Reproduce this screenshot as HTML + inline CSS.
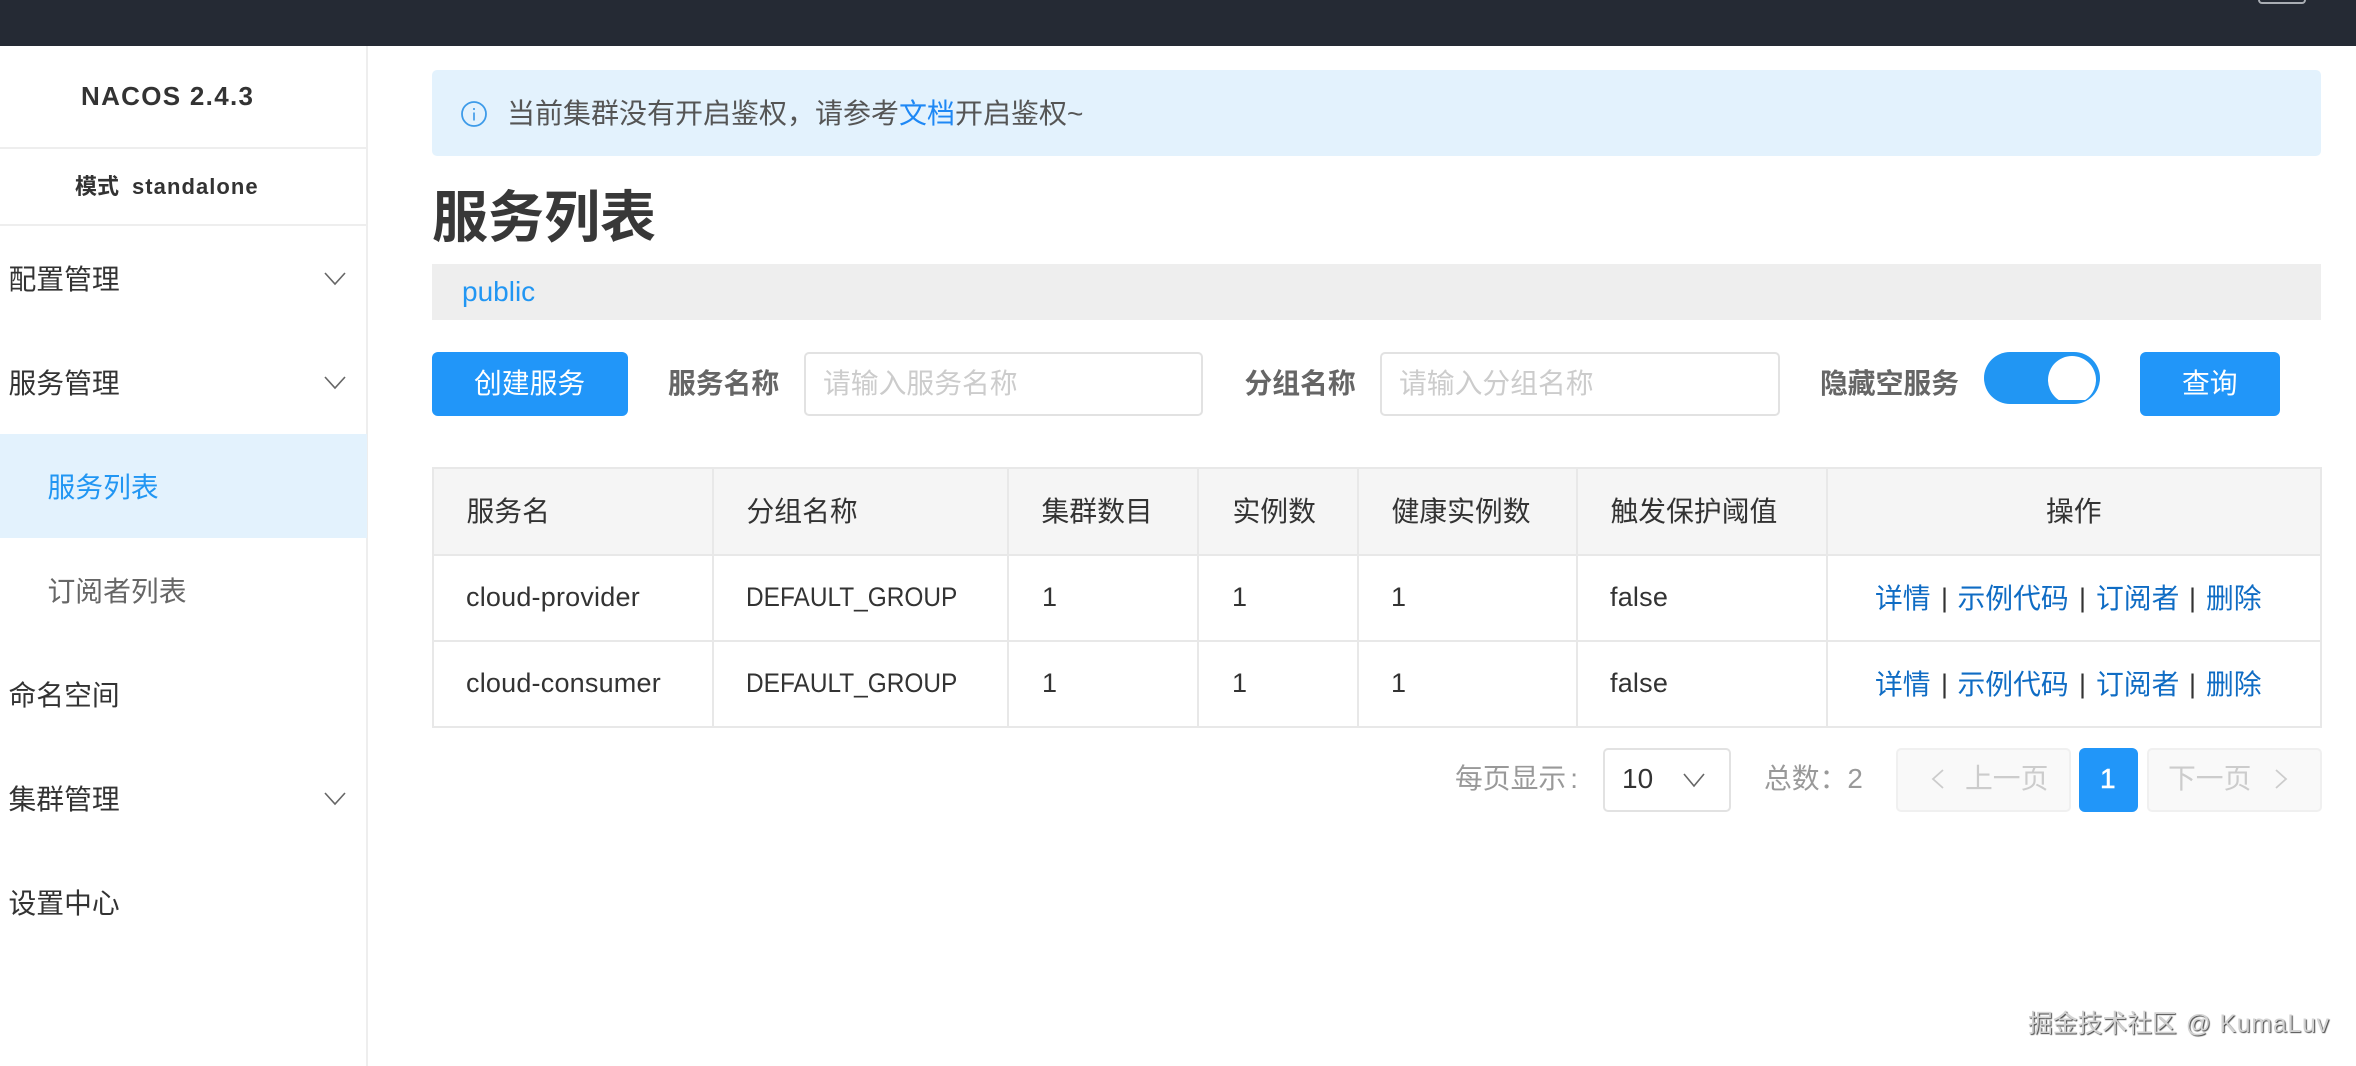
<!DOCTYPE html>
<html lang="zh-CN"><head><meta charset="utf-8"><title>Nacos</title>
<style>
html,body{margin:0;padding:0;background:#fff;width:2356px;height:1066px;overflow:hidden}
body{position:relative;font-family:"Liberation Sans","Noto Sans CJK SC",sans-serif;color:#333}
.a{position:absolute;box-sizing:border-box}
.t{position:absolute;white-space:nowrap;line-height:40px;height:40px;font-size:27.8px}
.b{font-weight:700}
.lb{color:#666;font-weight:700;font-size:27.8px}
.ph{color:#ccc}
.ln{background:#e8e8e8;position:absolute}
.lk{color:#0f6cc4}
.c{font-size:27px;letter-spacing:.2px}
.g{font-size:27px;transform:scaleX(.905);transform-origin:0 50%}
svg{position:absolute;overflow:visible}
</style></head><body>
<div class="a" style="left:0;top:0;width:2356px;height:46px;background:#252a34"></div>
<div class="a" style="left:2258px;top:-10px;width:48px;height:14px;border:2px solid #a9adb3;border-radius:4px"></div>

<div class="a" style="left:366px;top:46px;width:2px;height:1020px;background:#eee"></div>
<div class="a" style="left:0;top:147px;width:366px;height:2px;background:#eee"></div>
<div class="a" style="left:0;top:224px;width:366px;height:2px;background:#eee"></div>
<div class="t b" style="left:81px;top:76px;font-size:26px;letter-spacing:1.3px;color:#333">NACOS 2.4.3</div>
<div class="t b" style="left:75px;top:167px;font-size:22px;color:#333">模式<span style="margin-left:13px;letter-spacing:1.05px">standalone</span></div>

<div class="a" style="left:0;top:434px;width:367px;height:104px;background:#e3f2fd"></div>
<div class="t" style="left:8.5px;top:260px">配置管理</div>
<div class="t" style="left:8.5px;top:364px">服务管理</div>
<div class="t" style="left:47.5px;top:468px;color:#2196f3">服务列表</div>
<div class="t" style="left:47.5px;top:572px;color:#666">订阅者列表</div>
<div class="t" style="left:8.5px;top:676px">命名空间</div>
<div class="t" style="left:8.5px;top:780px">集群管理</div>
<div class="t" style="left:8.5px;top:884px">设置中心</div>
<svg style="left:324px;top:272px" width="22" height="13"><path d="M1 1L11 12L21 1" fill="none" stroke="#666" stroke-width="1.6"/></svg>
<svg style="left:324px;top:376px" width="22" height="13"><path d="M1 1L11 12L21 1" fill="none" stroke="#666" stroke-width="1.6"/></svg>
<svg style="left:324px;top:792px" width="22" height="13"><path d="M1 1L11 12L21 1" fill="none" stroke="#666" stroke-width="1.6"/></svg>

<div class="a" style="left:432px;top:70px;width:1889px;height:86px;background:#e3f2fd;border-radius:5px"></div>
<svg style="left:460px;top:100px" width="28" height="28"><circle cx="14" cy="14" r="12" fill="none" stroke="#3d9be9" stroke-width="1.8"/><rect x="13" y="12.5" width="2" height="8" fill="#5aa9ec"/><rect x="13" y="8" width="2" height="2" fill="#5aa9ec"/></svg>
<div class="t" style="left:507px;top:94px;font-size:28px;color:#555">当前集群没有开启鉴权，请参考<span style="color:#1e88f5">文档</span>开启鉴权~</div>

<div class="t" style="left:432px;top:188px;font-size:56px;line-height:60px;height:60px;font-weight:700;color:#383838">服务列表</div>

<div class="a" style="left:432px;top:264px;width:1889px;height:56px;background:#eee"></div>
<div class="t" style="left:462px;top:272px;color:#2196f3;font-size:28px">public</div>

<div class="a" style="left:432px;top:352px;width:196px;height:64px;background:#2196f9;border-radius:6px"></div>
<div class="t" style="left:474px;top:364px;color:#fff">创建服务</div>
<div class="t lb" style="left:668px;top:364px">服务名称</div>
<div class="a" style="left:804px;top:352px;width:399px;height:64px;border:2px solid #e2e2e2;border-radius:5px"></div>
<div class="t ph" style="left:823px;top:364px">请输入服务名称</div>
<div class="t lb" style="left:1244.5px;top:364px">分组名称</div>
<div class="a" style="left:1380px;top:352px;width:400px;height:64px;border:2px solid #e2e2e2;border-radius:5px"></div>
<div class="t ph" style="left:1399px;top:364px">请输入分组名称</div>
<div class="t lb" style="left:1820px;top:364px">隐藏空服务</div>
<div class="a" style="left:1984px;top:352px;width:116px;height:52px;background:#2196f3;border-radius:26px"></div>
<div class="a" style="left:2048px;top:356px;width:48px;height:44px;overflow:hidden"><div class="a" style="left:0;top:0;width:48px;height:48px;background:#fff;border-radius:50%"></div></div>
<div class="a" style="left:2140px;top:352px;width:140px;height:64px;background:#2196f9;border-radius:6px"></div>
<div class="t" style="left:2182px;top:364px;color:#fff">查询</div>

<div class="a" style="left:432px;top:468px;width:1889px;height:87px;background:#f5f5f5"></div>
<div class="ln" style="left:432px;top:467px;width:1889px;height:2px"></div>
<div class="ln" style="left:432px;top:554px;width:1889px;height:2px"></div>
<div class="ln" style="left:432px;top:640px;width:1889px;height:2px"></div>
<div class="ln" style="left:432px;top:726px;width:1889px;height:2px"></div>
<div class="ln" style="left:432px;top:467px;width:2px;height:261px"></div>
<div class="ln" style="left:712px;top:467px;width:2px;height:261px"></div>
<div class="ln" style="left:1007px;top:467px;width:2px;height:261px"></div>
<div class="ln" style="left:1197px;top:467px;width:2px;height:261px"></div>
<div class="ln" style="left:1357px;top:467px;width:2px;height:261px"></div>
<div class="ln" style="left:1576px;top:467px;width:2px;height:261px"></div>
<div class="ln" style="left:1826px;top:467px;width:2px;height:261px"></div>
<div class="ln" style="left:2320px;top:467px;width:2px;height:261px"></div>

<div class="t" style="left:466.5px;top:492px">服务名</div>
<div class="t" style="left:746.5px;top:492px">分组名称</div>
<div class="t" style="left:1041.5px;top:492px">集群数目</div>
<div class="t" style="left:1232.5px;top:492px">实例数</div>
<div class="t" style="left:1391.5px;top:492px">健康实例数</div>
<div class="t" style="left:1610.5px;top:492px">触发保护阈值</div>
<div class="t" style="left:2046px;top:492px">操作</div>

<div class="t c" style="left:466px;top:577px">cloud-provider</div>
<div class="t g" style="left:746px;top:577px">DEFAULT_GROUP</div>
<div class="t c" style="left:1042px;top:577px">1</div>
<div class="t c" style="left:1232px;top:577px">1</div>
<div class="t c" style="left:1391px;top:577px">1</div>
<div class="t c" style="left:1610px;top:577px">false</div>
<div class="t lk" style="left:1875px;top:579px">详情</div>
<div class="t" style="left:1941px;top:578px;font-size:27px">|</div>
<div class="t lk" style="left:1957.5px;top:579px">示例代码</div>
<div class="t" style="left:2079px;top:578px;font-size:27px">|</div>
<div class="t lk" style="left:2096px;top:579px">订阅者</div>
<div class="t" style="left:2189px;top:578px;font-size:27px">|</div>
<div class="t lk" style="left:2206px;top:579px">删除</div>

<div class="t c" style="left:466px;top:663px">cloud-consumer</div>
<div class="t g" style="left:746px;top:663px">DEFAULT_GROUP</div>
<div class="t c" style="left:1042px;top:663px">1</div>
<div class="t c" style="left:1232px;top:663px">1</div>
<div class="t c" style="left:1391px;top:663px">1</div>
<div class="t c" style="left:1610px;top:663px">false</div>
<div class="t lk" style="left:1875px;top:665px">详情</div>
<div class="t" style="left:1941px;top:664px;font-size:27px">|</div>
<div class="t lk" style="left:1957.5px;top:665px">示例代码</div>
<div class="t" style="left:2079px;top:664px;font-size:27px">|</div>
<div class="t lk" style="left:2096px;top:665px">订阅者</div>
<div class="t" style="left:2189px;top:664px;font-size:27px">|</div>
<div class="t lk" style="left:2206px;top:665px">删除</div>

<div class="t" style="left:1455px;top:759px;color:#999">每页显示<span style="margin-left:4px">:</span></div>
<div class="a" style="left:1603px;top:748px;width:128px;height:64px;border:2px solid #e2e2e2;border-radius:5px"></div>
<div class="t" style="left:1622px;top:759px;font-size:28px;color:#333">10</div>
<svg style="left:1683px;top:773px" width="22" height="14"><path d="M1 1L11 13L21 1" fill="none" stroke="#666" stroke-width="1.6"/></svg>
<div class="t" style="left:1764px;top:759px;color:#999">总数：2</div>
<div class="a" style="left:1896px;top:748px;width:175px;height:64px;background:#f9f9f9;border:2px solid #f0f0f0;border-radius:5px"></div>
<svg style="left:1931px;top:769px" width="14" height="20"><path d="M12 1L2 10L12 19" fill="none" stroke="#ccc" stroke-width="1.8"/></svg>
<div class="t" style="left:1965px;top:759px;color:#ccc">上一页</div>
<div class="a" style="left:2079px;top:748px;width:59px;height:64px;background:#2196f9;border-radius:6px"></div>
<div class="t" style="left:2100px;top:759px;color:#fff;font-size:28px;-webkit-text-stroke:.5px #fff">1</div>
<div class="a" style="left:2147px;top:748px;width:175px;height:64px;background:#f9f9f9;border:2px solid #f0f0f0;border-radius:5px"></div>
<div class="t" style="left:2168px;top:759px;color:#ccc">下一页</div>
<svg style="left:2274px;top:769px" width="14" height="20"><path d="M2 1L12 10L2 19" fill="none" stroke="#ccc" stroke-width="1.8"/></svg>

<div class="t" style="left:2028px;top:1005px;font-size:24.8px;color:#d2d2d2;text-shadow:1px 1px 1px #444">掘金技术社区<span style="margin-left:9px;letter-spacing:.8px">@ KumaLuv</span></div>
</body></html>
